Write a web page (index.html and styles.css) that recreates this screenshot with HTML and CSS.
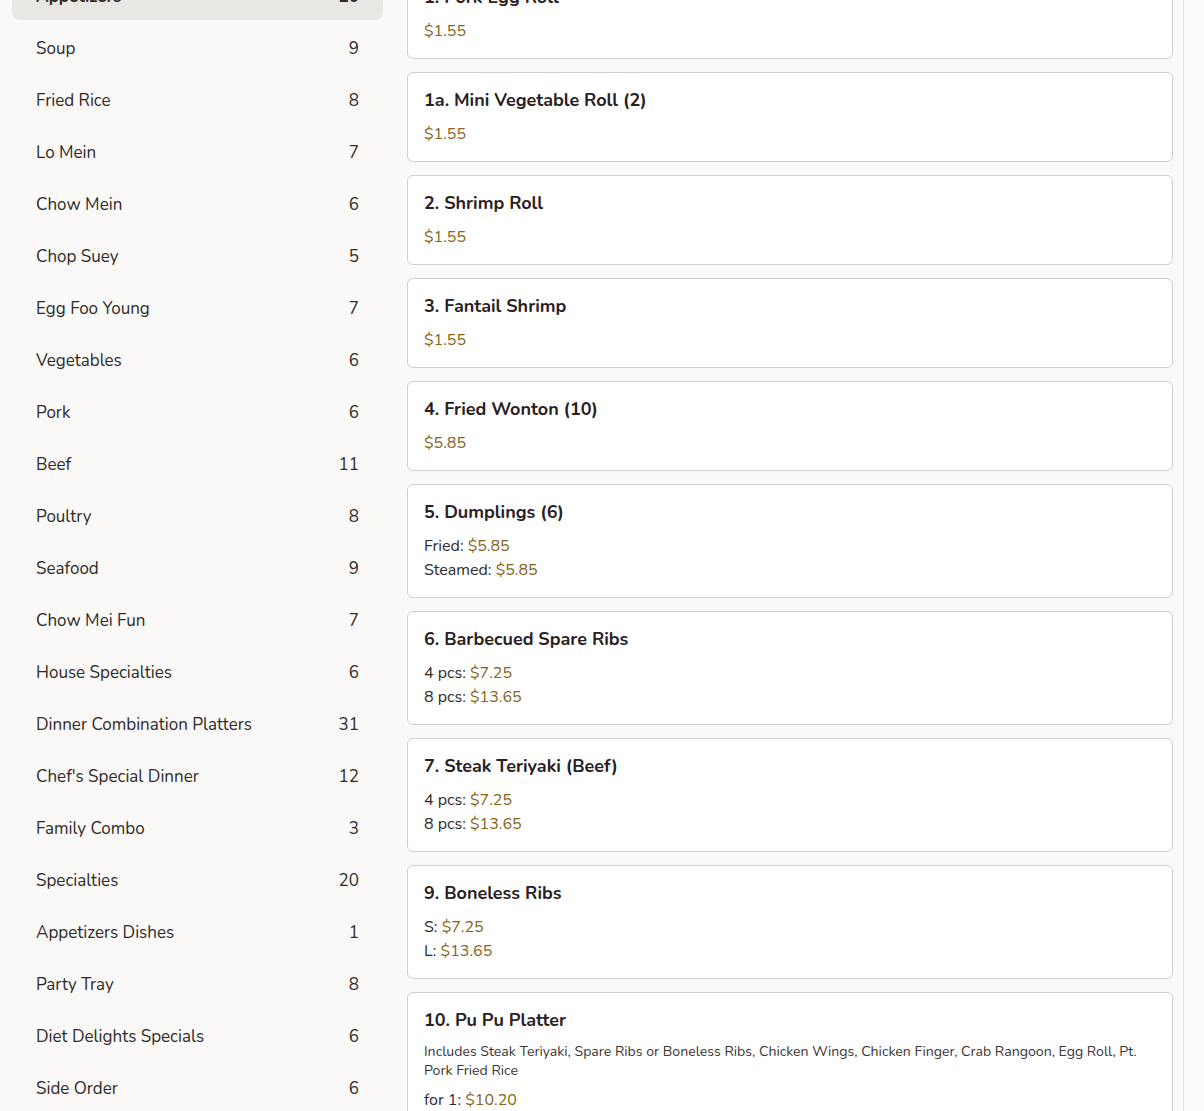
FILE: index.html
```html
<!DOCTYPE html>
<html lang="en">
<head>
    <meta charset="UTF-8">
    <meta name="viewport" content="width=device-width, initial-scale=1.0">
    <title>Menu</title>
    <link rel="stylesheet" href="styles.css">
</head>
<body>
    <div class="page">
        <div class="categories">
            <div class="cat-item active"><span>Appetizers</span><span>20</span></div>
            <div class="cat-item"><span>Soup</span><span>9</span></div>
            <div class="cat-item"><span>Fried Rice</span><span>8</span></div>
            <div class="cat-item"><span>Lo Mein</span><span>7</span></div>
            <div class="cat-item"><span>Chow Mein</span><span>6</span></div>
            <div class="cat-item"><span>Chop Suey</span><span>5</span></div>
            <div class="cat-item"><span>Egg Foo Young</span><span>7</span></div>
            <div class="cat-item"><span>Vegetables</span><span>6</span></div>
            <div class="cat-item"><span>Pork</span><span>6</span></div>
            <div class="cat-item"><span>Beef</span><span>11</span></div>
            <div class="cat-item"><span>Poultry</span><span>8</span></div>
            <div class="cat-item"><span>Seafood</span><span>9</span></div>
            <div class="cat-item"><span>Chow Mei Fun</span><span>7</span></div>
            <div class="cat-item"><span>House Specialties</span><span>6</span></div>
            <div class="cat-item"><span>Dinner Combination Platters</span><span>31</span></div>
            <div class="cat-item"><span>Chef's Special Dinner</span><span>12</span></div>
            <div class="cat-item"><span>Family Combo</span><span>3</span></div>
            <div class="cat-item"><span>Specialties</span><span>20</span></div>
            <div class="cat-item"><span>Appetizers Dishes</span><span>1</span></div>
            <div class="cat-item"><span>Party Tray</span><span>8</span></div>
            <div class="cat-item"><span>Diet Delights Specials</span><span>6</span></div>
            <div class="cat-item"><span>Side Order</span><span>6</span></div>
        </div>

        <div class="items">
            <div class="item">
                <div class="item-name">1. Pork Egg Roll</div>
                <div class="prices"><div><span class="price">$1.55</span></div></div>
            </div>
            <div class="item">
                <div class="item-name">1a. Mini Vegetable Roll (2)</div>
                <div class="prices"><div><span class="price">$1.55</span></div></div>
            </div>
            <div class="item">
                <div class="item-name">2. Shrimp Roll</div>
                <div class="prices"><div><span class="price">$1.55</span></div></div>
            </div>
            <div class="item">
                <div class="item-name">3. Fantail Shrimp</div>
                <div class="prices"><div><span class="price">$1.55</span></div></div>
            </div>
            <div class="item">
                <div class="item-name">4. Fried Wonton (10)</div>
                <div class="prices"><div><span class="price">$5.85</span></div></div>
            </div>
            <div class="item">
                <div class="item-name">5. Dumplings (6)</div>
                <div class="prices">
                    <div>Fried: <span class="price">$5.85</span></div>
                    <div>Steamed: <span class="price">$5.85</span></div>
                </div>
            </div>
            <div class="item">
                <div class="item-name">6. Barbecued Spare Ribs</div>
                <div class="prices">
                    <div>4 pcs: <span class="price">$7.25</span></div>
                    <div>8 pcs: <span class="price">$13.65</span></div>
                </div>
            </div>
            <div class="item">
                <div class="item-name">7. Steak Teriyaki (Beef)</div>
                <div class="prices">
                    <div>4 pcs: <span class="price">$7.25</span></div>
                    <div>8 pcs: <span class="price">$13.65</span></div>
                </div>
            </div>
            <div class="item">
                <div class="item-name">9. Boneless Ribs</div>
                <div class="prices">
                    <div>S: <span class="price">$7.25</span></div>
                    <div>L: <span class="price">$13.65</span></div>
                </div>
            </div>
            <div class="item">
                <div class="item-name">10. Pu Pu Platter</div>
                <div class="item-desc">Includes Steak Teriyaki, Spare Ribs or Boneless Ribs, Chicken Wings, Chicken Finger, Crab Rangoon, Egg Roll, Pt. Pork Fried Rice</div>
                <div class="prices">
                    <div>for 1: <span class="price">$10.20</span></div>
                    <div>for 2: <span class="price">$20.40</span></div>
                </div>
            </div>
        </div>
    </div>
</body>
</html>
```

FILE: styles.css
```css
* { margin: 0; padding: 0; box-sizing: border-box; }
html, body {
    height: 100%;
    overflow: hidden;
}
body {
    background: #fcfbfa;
    font-family: "Nunito", "Open Sans", sans-serif;
    color: #2a2422;
}
.page {
    display: flex;
    gap: 24px;
    width: 1184px;
    margin-top: -32px;
    padding: 0 10px 0 12px;
    background: #faf9f7;
    border-right: 1px solid #e6e3df;
    min-height: 1200px;
}
.categories {
    width: 371px;
    flex-shrink: 0;
    display: flex;
    flex-direction: column;
}
.cat-item {
    display: flex;
    justify-content: space-between;
    align-items: center;
    height: 52px;
    padding: 4px 24px 0;
    font-size: 17px;
    color: #2e2a28;
    border-radius: 8px;
}
.cat-item.active {
    background: #e9e7e4;
    font-weight: 700;
}
.items {
    flex: 1;
    display: flex;
    flex-direction: column;
    gap: 13px;
    padding-top: 1px;
}
.item {
    background: #ffffff;
    border: 1px solid #d3d0cb;
    border-radius: 6px;
    padding: 15px 16px 15px;
}
.item-name {
    font-size: 18px;
    font-weight: 700;
    line-height: 24px;
    color: #2a211f;
}
.item-desc {
    margin-top: 10px;
    font-size: 14.1px;
    line-height: 19px;
    color: #3b3431;
}
.prices {
    margin-top: 10px;
    font-size: 16px;
    line-height: 24px;
    color: #2e2a28;
}
.item-desc + .prices {
    margin-top: 8px;
}
.price {
    color: #866419;
}
```
